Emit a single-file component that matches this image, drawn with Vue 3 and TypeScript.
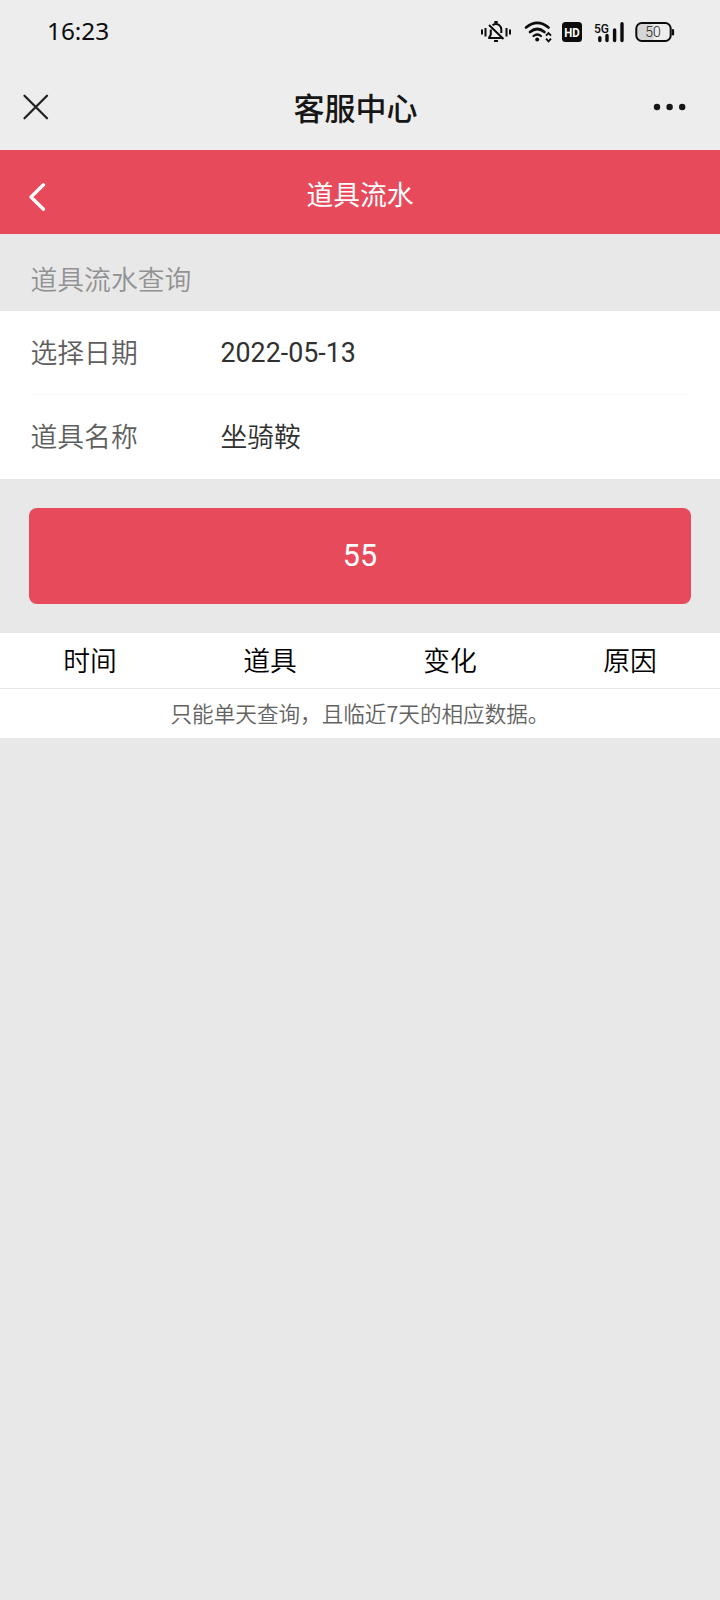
<script setup lang="ts">
interface Field {
  label: string
  value: string
  kind: 'date' | 'name'
}

const fields: Field[] = [
  { label: '选择日期', value: '2022-05-13', kind: 'date' },
  { label: '道具名称', value: '坐骑鞍', kind: 'name' },
]
const columns: string[] = ['时间', '道具', '变化', '原因']
</script>

<template>
  <div class="screen">
    <div class="status">
      <span class="clock">16:23</span>
      <svg class="status-icons" width="200" height="32" viewBox="475 16 200 32" fill="none" stroke="#0c0c0c">
        <g stroke-width="2" stroke-linejoin="round">
          <path d="M482 29.500v5M485.500 28v8.500M506.500 28v8.500M510 29.500v5" />
          <path d="M492.500 25.200q3.500-2.400 6.800 0q2 1.500 2 4.300v3.500M490.800 29.500v5l-1.800 3.500h12.500M489 25L503.500 39" />
          <path d="M494.300 22h3.400M494 41h4" />
        </g>
        <g stroke-width="2.700" stroke-linecap="round">
          <path d="M526 27.500Q537.300 18.300 548.500 27.500" />
          <path d="M530 32Q537.300 26 544.500 32" />
          <path d="M533.500 36Q537.300 33 541 36" stroke-width="2.200" />
        </g>
        <circle cx="537.200" cy="39.600" r="2" fill="#0c0c0c" stroke="none" />
        <path d="M546 35.700l2.500-2.600 2.500 2.600M546 38.700l2.500 2.600 2.500-2.600" stroke-width="1.900" />
        <rect x="562" y="22" width="20" height="20" rx="3.500" fill="#0c0c0c" stroke="none" />
        <text x="572" y="37.300" class="hd" text-anchor="middle" textLength="15.500" lengthAdjust="spacingAndGlyphs">HD</text>
        <text x="594" y="32.800" class="net" textLength="15" lengthAdjust="spacingAndGlyphs">5G</text>
        <g stroke-width="3.400" stroke-linecap="round">
          <path d="M599.800 37.700v2.800M607 35.500v5M614.600 30v10.500M622 23.700v16.800" />
        </g>
        <rect x="637" y="24" width="17" height="17" rx="4" fill="#d6d6d6" stroke="none" />
        <rect x="636.300" y="23" width="34.400" height="18" rx="5.500" stroke-width="2" />
        <path d="M673 30v4.500" stroke-width="2.200" stroke-linecap="round" />
        <text x="653" y="37" class="battery" text-anchor="middle" textLength="15.500" lengthAdjust="spacingAndGlyphs">50</text>
      </svg>
    </div>

    <header class="nav">
      <svg class="close" width="28" height="28" viewBox="0 0 28 28" fill="none" stroke="#222" stroke-width="2.300" stroke-linecap="round">
        <path d="M2.500 2.800L25 25.300M25 2.800L2.500 25.300" />
      </svg>
      <h1 class="nav-title">客服中心</h1>
      <svg class="more" width="34" height="8" viewBox="0 0 34 8" fill="#161616">
        <circle cx="4" cy="4" r="3.200" />
        <circle cx="16.600" cy="4" r="3.200" />
        <circle cx="29.200" cy="4" r="3.200" />
      </svg>
    </header>

    <div class="banner">
      <svg class="back" width="18" height="30" viewBox="0 0 18 30" fill="none" stroke="#fff" stroke-width="3.300" stroke-linecap="round" stroke-linejoin="round">
        <path d="M15.500 2.800L3 15L15.500 27.200" />
      </svg>
      <h2 class="banner-title">道具流水</h2>
    </div>

    <p class="section">道具流水查询</p>

    <div class="form">
      <div v-for="field in fields" :key="field.label" class="row">
        <span class="label">{{ field.label }}</span>
        <span class="value" :class="field.kind">{{ field.value }}</span>
      </div>
    </div>

    <button class="submit" type="button">55</button>

    <div class="table">
      <div class="head">
        <span v-for="column in columns" :key="column" class="cell">{{ column }}</span>
      </div>
      <p class="note">只能单天查询，且临近7天的相应数据。</p>
    </div>
  </div>
</template>

<style>
body {
  margin: 0;
  background: #e8e8e8;
}
</style>

<style scoped>
.screen {
  width: 720px;
  height: 1600px;
  overflow: hidden;
  background: #e8e8e8;
  font-family: 'Noto Sans CJK SC', sans-serif;
  font-weight: 350;
  font-size: 26.8px;
  display: flex;
  flex-direction: column;
}
.status {
  height: 64px;
  flex: none;
  background: #ededed;
  display: flex;
  justify-content: space-between;
  align-items: center;
  padding: 0 45px 0 47px;
}
.clock {
  font: 400 24.3px/32px 'Noto Sans', sans-serif;
  margin-top: -2px;
  color: #0c0c0c;
}
.hd {
  font: 700 13.5px Roboto, sans-serif;
  fill: #fff;
  stroke: none;
}
.net {
  font: 500 13px Roboto, sans-serif;
  fill: #0c0c0c;
  stroke: none;
}
.battery {
  font: 300 14.5px Roboto, sans-serif;
  fill: #222;
  stroke: none;
}
.nav {
  height: 86px;
  flex: none;
  background: #ededed;
  display: flex;
  justify-content: space-between;
  align-items: center;
  padding: 0 33px 0 22px;
}
.nav-title {
  margin: 0 0 0 8px;
  font-size: 31px;
  line-height: 40px;
  font-weight: 500;
  color: #161616;
}
.banner {
  height: 84px;
  flex: none;
  background: #e74b5b;
  display: grid;
  grid-template-columns: 60px 1fr 60px;
  align-items: center;
  color: #fff;
}
.back {
  margin: 9px 0 0 28px;
}
.banner-title {
  margin: 4px 0 0;
  text-align: center;
  font-size: 26.8px;
  line-height: 36px;
  font-weight: 400;
}
.section {
  margin: 0;
  height: 77px;
  flex: none;
  box-sizing: border-box;
  padding: 26px 0 0 30.5px;
  line-height: 38px;
  color: #929292;
}
.form {
  background: #fff;
  height: 168px;
  flex: none;
  padding: 0 32px 0 31px;
}
.row {
  height: 83px;
  box-sizing: border-box;
  display: flex;
  align-items: center;
}
.row + .row {
  height: 85px;
  padding-bottom: 2px;
  border-top: 1px solid #f8f8f8;
}
.label {
  width: 190px;
  line-height: 38px;
  margin: -1px 0 0 -0.5px;
  color: #5e5e5e;
}
.value {
  line-height: 38px;
  color: #303030;
}
.date {
  font-family: Roboto, sans-serif;
  font-weight: 400;
}
.name {
  margin-top: -1px;
}
.submit {
  margin: 29px;
  height: 96px;
  flex: none;
  padding: 0 0 2px;
  border: 0;
  border-radius: 8px;
  background: #e74b5b;
  color: #fff;
  font: 400 30.5px Roboto, sans-serif;
}
.table {
  background: #fff;
  height: 105px;
  flex: none;
}
.head {
  display: grid;
  grid-template-columns: repeat(4, 1fr);
  height: 56px;
  box-sizing: border-box;
  border-bottom: 1px solid #e8e8e8;
  line-height: 53px;
  text-align: center;
  color: #000;
}
.note {
  margin: 0;
  text-align: center;
  font-size: 21.6px;
  line-height: 48px;
  color: #626262;
}
</style>
